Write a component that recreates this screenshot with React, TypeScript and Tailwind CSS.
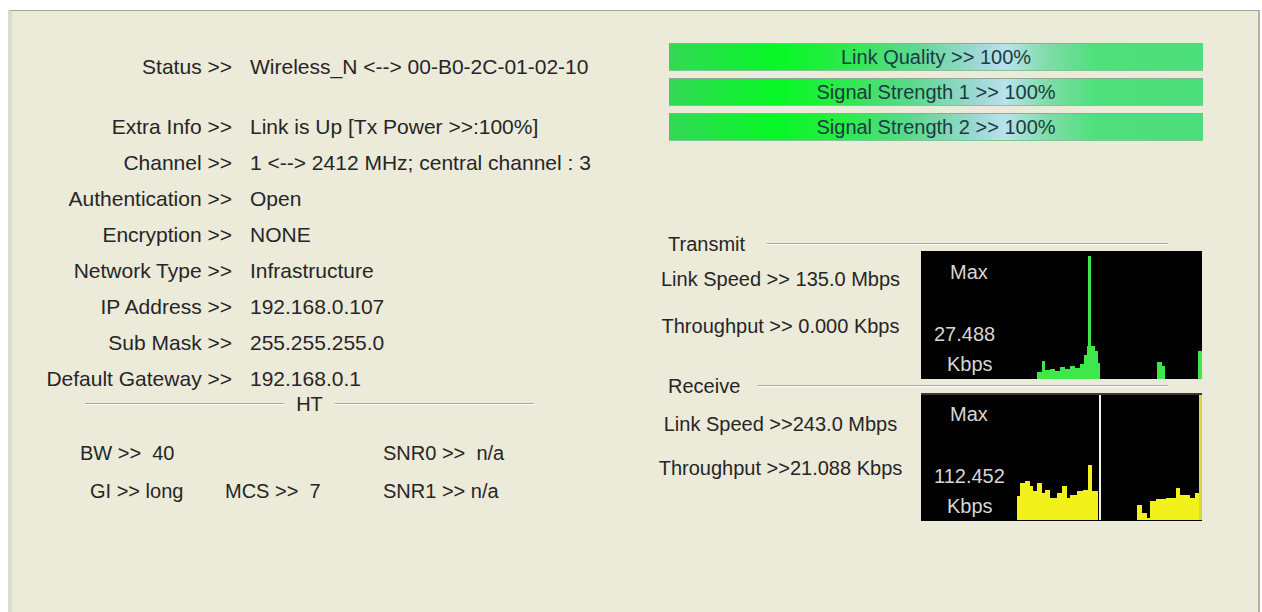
import React from 'react'

const font = { fontFamily: '"Liberation Sans", Arial, sans-serif' }

const infoRows: [string, string][] = [
  ['Extra Info >>', 'Link is Up [Tx Power >>:100%]'],
  ['Channel >>', '1 <--> 2412 MHz; central channel : 3'],
  ['Authentication >>', 'Open'],
  ['Encryption >>', 'NONE'],
  ['Network Type >>', 'Infrastructure'],
  ['IP Address >>', '192.168.0.107'],
  ['Sub Mask >>', '255.255.255.0'],
  ['Default Gateway >>', '192.168.0.1'],
]

const bars = ['Link Quality >> 100%', 'Signal Strength 1 >> 100%', 'Signal Strength 2 >> 100%']

// step outline: [x, topY] pairs, each segment runs until the next x
function steps(pts: [number, number][], xEnd: number, bottom: number) {
  let d = `M${pts[0][0]},${bottom}`
  pts.forEach(([x, y]) => {
    d += ` H${x} V${y}`
  })
  d += ` H${xEnd} V${bottom} Z`
  return d
}

const txMain = steps(
  [
    [116, 121], [121, 110], [124, 119], [129, 118], [134, 120], [139, 116], [144, 118],
    [149, 115], [154, 117], [159, 113], [163, 104], [166, 95], [167, 5], [170, 95], [174, 100], [177, 112],
  ],
  179,
  128
)
const txBump = steps([[236, 111], [241, 115]], 244, 128)
const txEdge = steps([[277, 100]], 281, 128)

const rxMain = steps(
  [
    [96, 103], [99, 90], [104, 88], [109, 93], [112, 98], [116, 90], [121, 100], [124, 97],
    [129, 105], [136, 100], [141, 93], [146, 105], [149, 102], [156, 98], [162, 97], [167, 72], [171, 98],
  ],
  177,
  127
)
const rxRight = steps(
  [
    [216, 112], [221, 120], [226, 125], [229, 108], [235, 106], [245, 105], [255, 95], [259, 102],
    [269, 105], [274, 100],
  ],
  281,
  127
)

function Chart({ value, kind }: { value: string; kind: 'tx' | 'rx' }) {
  return (
    <div className="relative w-[281px] h-[128px] bg-black shrink-0">
      <svg className="absolute inset-0" width="281" height="128" viewBox="0 0 281 128">
        {kind === 'tx' ? (
          <g fill="#3ee84a">
            <path d={txMain} />
            <path d={txBump} />
            <path d={txEdge} />
          </g>
        ) : (
          <g>
            <path d={rxMain} fill="#f2f21a" />
            <path d={rxRight} fill="#f2f21a" />
            <rect x="278" y="1" width="3" height="126" fill="#d8d840" />
            <rect x="178" y="2" width="2" height="125" fill="#f0f0e0" />
            <rect x="0" y="0" width="281" height="2" fill="#3a3a3a" />
          </g>
        )}
      </svg>
      <div className="absolute left-[29px] top-[6px] text-[20px] text-[#d6d6d6]">Max</div>
      <div className="absolute left-[13px] top-[68px] text-[20px] text-[#d6d6d6]">{value}</div>
      <div className="absolute left-[26px] top-[98px] text-[20px] text-[#d6d6d6]">Kbps</div>
    </div>
  )
}

function GroupHeader({ title, lineStart }: { title: string; lineStart: string }) {
  return (
    <div className="flex items-center h-[14px] pl-[28px] pr-[90px]">
      <span className="text-[20px] leading-none whitespace-nowrap">{title}</span>
      <div className={`${lineStart} flex-1 border-t border-[#a9a89c] border-b border-b-white`} />
    </div>
  )
}

export default function App() {
  return (
    <div className="w-[1262px] h-[612px] bg-white pt-[10px] pl-[8px] pr-[2px] overflow-hidden" style={font}>
      <div className="h-[602px] bg-[#ecead9] border-t border-t-[#a2a29a] border-r-2 border-r-[#b0b0a6] border-l-4 border-l-[#dcdcd2] flex text-[20px] text-[#262626]">
        {/* left: status info */}
        <div className="w-[628px] shrink-0 pt-[38px] text-[21px]">
          <div className="grid grid-cols-[220px_1fr] gap-x-[18px] h-[36px] items-center mb-[24px]">
            <span className="text-right whitespace-nowrap">Status &gt;&gt;</span>
            <span className="whitespace-nowrap">Wireless_N &lt;--&gt; 00-B0-2C-01-02-10</span>
          </div>
          {infoRows.map(([label, value]) => (
            <div key={label} className="grid grid-cols-[220px_1fr] gap-x-[18px] h-[36px] items-center">
              <span className="text-right whitespace-nowrap">{label}</span>
              <span className="whitespace-nowrap">{value}</span>
            </div>
          ))}
          <div className="flex items-center h-[14px] ml-[73px] w-[449px] text-[20px]">
            <div className="flex-1 border-t border-[#a9a89c] border-b border-b-white" />
            <span className="px-[12px] leading-none">HT</span>
            <div className="flex-1 border-t border-[#a9a89c] border-b border-b-white" />
          </div>
          <div className="flex h-[38px] items-center pl-[68px] mt-[23px] whitespace-pre text-[20px]">
            <span className="w-[303px]">BW &gt;&gt;  40</span>
            <span>SNR0 &gt;&gt;  n/a</span>
          </div>
          <div className="flex h-[38px] items-center pl-[78px] whitespace-pre text-[20px]">
            <span className="w-[135px]">GI &gt;&gt; long</span>
            <span className="w-[158px]">MCS &gt;&gt;  7</span>
            <span>SNR1 &gt;&gt; n/a</span>
          </div>
        </div>

        {/* right: bars and throughput */}
        <div className="flex-1 pt-[32px]">
          <div className="flex flex-col gap-[7px] ml-[29px] w-[534px]">
            {bars.map((b) => (
              <div
                key={b}
                className="h-[28px] flex items-center justify-center text-[20px] text-[#1d3a44] bg-[linear-gradient(to_right,#34d856_0%,#06f826_20%,#22ee3e_30%,#5ad98a_45%,#9fd8d6_58%,#b8e3ec_63%,#7fdca8_71%,#4fe07c_80%,#4cde7a_100%)] shadow-[inset_0_1px_0_#8aab96,inset_0_-1px_0_#7fc596]"
              >
                {b}
              </div>
            ))}
          </div>

          <div className="mt-[96px]">
            <GroupHeader title="Transmit" lineStart="ml-[22px]" />
            <div className="flex">
              <div className="w-[281px] shrink-0 text-center">
                <div className="h-[50px] pt-[13px]">Link Speed &gt;&gt; 135.0 Mbps</div>
                <div className="pt-[10px]">Throughput &gt;&gt; 0.000 Kbps</div>
              </div>
              <Chart value="27.488" kind="tx" />
            </div>
            <GroupHeader title="Receive" lineStart="ml-[18px]" />
            <div className="flex">
              <div className="w-[281px] shrink-0 text-center">
                <div className="h-[50px] pt-[16px]">Link Speed &gt;&gt;243.0 Mbps</div>
                <div className="pt-[10px]">Throughput &gt;&gt;21.088 Kbps</div>
              </div>
              <Chart value="112.452" kind="rx" />
            </div>
          </div>
        </div>
      </div>
    </div>
  )
}
